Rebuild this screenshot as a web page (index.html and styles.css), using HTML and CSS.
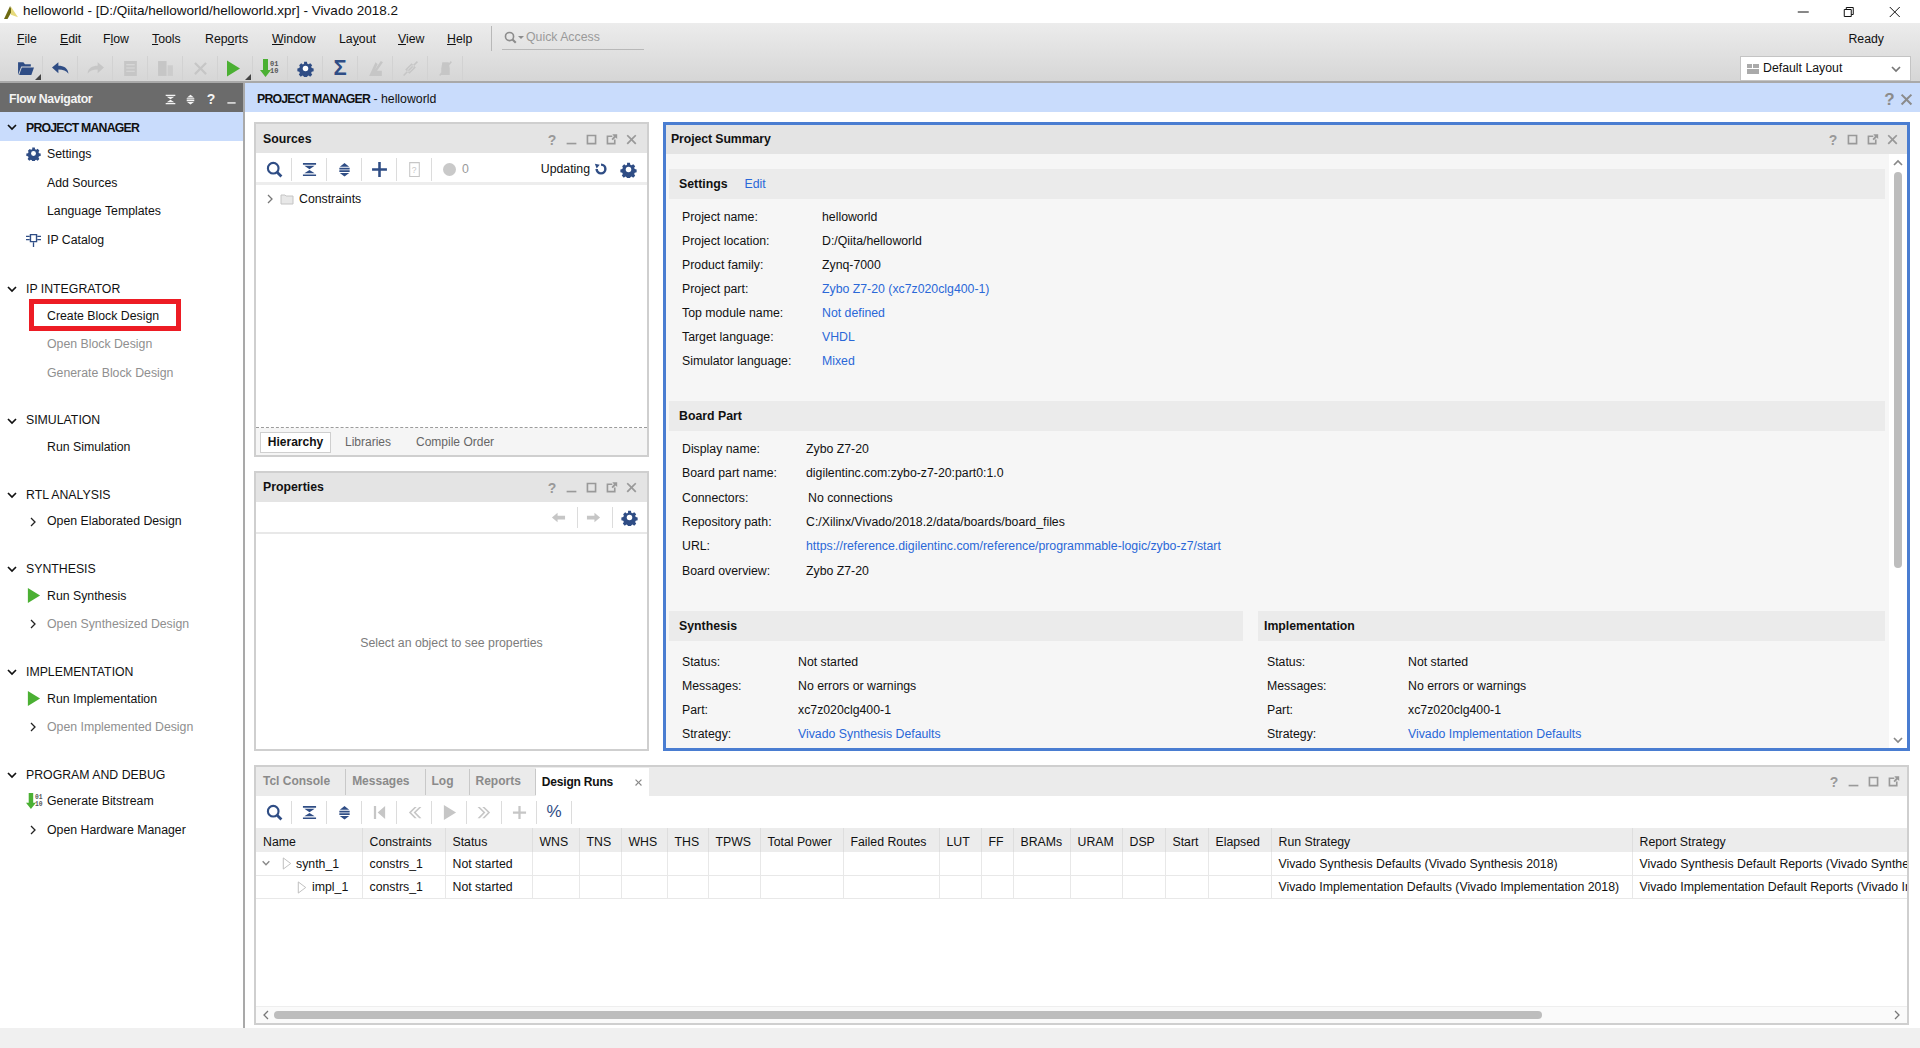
FILE: index.html
```html
<!DOCTYPE html>
<html lang="en">
<head>
<meta charset="utf-8">
<title>helloworld - Vivado 2018.2</title>
<link rel="stylesheet" href="styles.css">
</head>
<body>
<svg class="defs" aria-hidden="true">
  <symbol id="gear" viewBox="0 0 16 16"><path d="M6.500 1h3l.4 2 1.300.6 1.800-1.100 2 2.100-1.100 1.700.6 1.300 2 .4v3l-2 .4-.6 1.300 1.100 1.800-2.100 2-1.700-1.100-1.300.6-.4 2h-3l-.4-2-1.300-.6-1.800 1.100-2-2.100 1.100-1.700-.6-1.300-2-.4v-3l2-.4.6-1.300L1.400 4.600l2.100-2 1.700 1.100 1.300-.6z" transform="translate(.8 .8) scale(.9)"/><circle cx="8" cy="8" r="2.600" fill="#fff"/></symbol>
  <symbol id="search" viewBox="0 0 16 16"><circle cx="6.800" cy="6.800" r="5" fill="none" stroke="currentColor" stroke-width="2"/><path d="M10.500 10.500l4 4" stroke="currentColor" stroke-width="2.600"/></symbol>
  <symbol id="collapse" viewBox="0 0 16 16"><path d="M1 1h14v1.800H1zM1 13.200h14V15H1zM2.500 4h11L8 7.600zM8 8.400L13.500 12h-11z"/></symbol>
  <symbol id="expand" viewBox="0 0 16 16"><path d="M8 1l5 4H3zM2.500 6.200h11V8h-11zM2.500 8.800h11v1.800h-11zM3 11.600h10L8 15.400z"/></symbol>
  <symbol id="plus" viewBox="0 0 16 16"><path d="M6.800 1h2.400v5.800H15v2.400H9.200V15H6.800V9.200H1V6.800h5.800z"/></symbol>
  <symbol id="play" viewBox="0 0 16 16"><path d="M2 0l13 8-13 8z"/></symbol>
  <symbol id="first" viewBox="0 0 16 16"><path d="M2 1h2.400v14H2zM14 1v14L6 8z"/></symbol>
  <symbol id="prev" viewBox="0 0 16 16"><path d="M8 2L2 8l6 6h2.400l-6-6 6-6zM13 2L7 8l6 6h2.400l-6-6 6-6z"/></symbol>
  <symbol id="next" viewBox="0 0 16 16"><path d="M8 2l6 6-6 6H5.600l6-6-6-6zM3 2l6 6-6 6H.6l6-6-6-6z"/></symbol>
  <symbol id="cross" viewBox="0 0 16 16"><path d="M2 3.500L3.500 2 8 6.500 12.500 2 14 3.500 9.500 8l4.500 4.500-1.500 1.500L8 9.500 3.500 14 2 12.500 6.500 8z"/></symbol>
  <symbol id="min" viewBox="0 0 16 16"><path d="M2 12h12v2H2z"/></symbol>
  <symbol id="max" viewBox="0 0 16 16"><path d="M2 2h12v12H2zM4 4v8h8V4z" fill-rule="evenodd"/></symbol>
  <symbol id="pop" viewBox="0 0 16 16"><path d="M2 3h7v2H4v7h7V8h2v6H2zM9 1.500h6v6l-2-2-3.500 3.500-1.500-1.500L11 4z" fill-rule="evenodd"/></symbol>
  <symbol id="chev-d" viewBox="0 0 12 12"><path d="M2 4l4 4 4-4" fill="none" stroke="currentColor" stroke-width="1.700"/></symbol>
  <symbol id="chev-r" viewBox="0 0 12 12"><path d="M4 2l4 4-4 4" fill="none" stroke="currentColor" stroke-width="1.300"/></symbol>
  <symbol id="bits" viewBox="0 0 20 20"><path d="M3 1h5v11h3l-5.500 7L0 12h3z" fill="#4bb033"/><text x="10" y="8" font-size="7" font-family="Liberation Mono" font-weight="700" fill="#555">01</text><text x="10" y="15" font-size="7" font-family="Liberation Mono" font-weight="700" fill="#555">10</text></symbol>
  <symbol id="ipcat" viewBox="0 0 16 16"><path d="M4 2h8v9H4zM5.500 3.500v6h5v-6z" fill-rule="evenodd"/><path d="M0 4h4v1.400H0zM0 7.500h4v1.400H0zM12 4h4v1.400h-4zM12 7.500h4v1.400h-4zM7.300 11h1.400v5H7.300z"/></symbol>
  <symbol id="arrow-l" viewBox="0 0 16 16"><path d="M1 8l6-5v3h8v4H7v3z"/></symbol>
  <symbol id="arrow-r" viewBox="0 0 16 16"><path d="M15 8L9 3v3H1v4h8v3z"/></symbol>
</svg>

<header class="titlebar">
  <svg class="logo" viewBox="0 0 16 16"><path d="M0 16L7 1l2 6-5 9z" fill="#6d6a12"/><path d="M8 2l8 12-8-3z" fill="#e6da7c"/></svg>
  <span class="title">helloworld - [D:/Qiita/helloworld/helloworld.xpr] - Vivado 2018.2</span>
  <div class="winbtns">
    <svg class="winbtn" viewBox="0 0 12 12"><path d="M0 6h11" stroke="#111" fill="none"/></svg>
    <svg class="winbtn" viewBox="0 0 12 12"><path d="M1.500 3.500h7v7h-7zM3.500 3.500v-2h7v7h-2" stroke="#111" fill="none"/></svg>
    <svg class="winbtn" viewBox="0 0 12 12"><path d="M1 1l10 10M11 1L1 11" stroke="#111" fill="none"/></svg>
  </div>
</header>

<div class="chrome">
  <div class="menubar">
    <nav class="menus">
      <span class="menu m-file"><u>F</u>ile</span>
      <span class="menu m-edit"><u>E</u>dit</span>
      <span class="menu m-flow">F<u>l</u>ow</span>
      <span class="menu m-tools"><u>T</u>ools</span>
      <span class="menu m-reports">Rep<u>o</u>rts</span>
      <span class="menu m-window"><u>W</u>indow</span>
      <span class="menu m-layout">La<u>y</u>out</span>
      <span class="menu m-view"><u>V</u>iew</span>
      <span class="menu m-help"><u>H</u>elp</span>
    </nav>
    <div class="quick">
      <svg class="qicon"><use href="#search"/></svg><span class="caret"></span>
      <span>Quick Access</span>
    </div>
    <span class="ready">Ready</span>
  </div>
  <div class="toolbar">
    <div class="tools">
      <span class="tb tb-more"><svg class="ic16 navy" viewBox="0 0 16 16"><path d="M1 2h5l1.500 2H13v2H4L1 14z"/><path d="M4.500 7H16l-2.500 7H2z"/></svg></span>
      <span class="tb"><svg class="ic16 navy" viewBox="0 0 16 16"><path d="M6 2v3.500c5 0 9 2 9.500 7.500-2-3-5-4-9.500-4v3.500L0 7z"/></svg></span>
      <span class="tb"><svg class="ic16 dis" viewBox="0 0 16 16"><path d="M10 2v3.500C5 5.500 1 7.500.5 13c2-3 5-4 9.500-4v3.500L16 7z"/></svg></span>
      <span class="tb"><svg class="ic16 dis" viewBox="0 0 16 16"><path d="M2 1h12v14H2zM4 4v1h8V4zm0 3v1h8V7zm0 3v1h8v-1z" fill-rule="evenodd"/></svg></span>
      <span class="tb"><svg class="ic16 dis" viewBox="0 0 16 16"><path d="M1 1h8v14H1z"/><path d="M10 5h5v10h-5z" opacity=".7"/></svg></span>
      <span class="tb"><svg class="ic16 dis"><use href="#cross"/></svg></span>
      <span class="tb tb-more"><svg class="ic-run green"><use href="#play"/></svg></span>
      <span class="tb"><svg class="ic18"><use href="#bits"/></svg></span>
      <span class="tb"><svg class="ic16 navy"><use href="#gear"/></svg></span>
      <span class="tb sigma">Σ</span>
      <span class="tb"><svg class="ic16 dis" viewBox="0 0 16 16"><path d="M2 15L8 2l2 2-3 6h7v5zM13 1l2 1-9 13-2-1z"/></svg></span>
      <span class="tb"><svg class="ic16 dis" viewBox="0 0 16 16"><path d="M3 9l6-6 4 4-6 6zM5 9l2 2 4-4-2-2zM14 1l1 1L2 15l-1-1z" fill-rule="evenodd"/></svg></span>
      <span class="tb"><svg class="ic16 dis" viewBox="0 0 16 16"><path d="M5 2h6l1 6v6H4V8zM13 1l1 1L3 15l-1-1z"/></svg></span>
    </div>
    <div class="layout-select">
      <svg class="layout-ic" viewBox="0 0 12 10"><path d="M0 0h5v4H0zM6 0h6v4H6zM0 5h12v5H0z"/></svg>
      <span class="layout-name">Default Layout</span>
      <svg class="layout-chev"><use href="#chev-d"/></svg>
    </div>
  </div>
</div>

<main class="main">
  <aside class="nav">
    <div class="nav-head">
      <span class="nav-title">Flow Navigator</span>
      <span class="nav-head-ic">
        <svg class="ic10"><use href="#collapse"/></svg>
        <svg class="ic10"><use href="#expand"/></svg>
        <b class="q">?</b>
        <svg class="ic10"><use href="#min"/></svg>
      </span>
    </div>
    <section class="sec sec-first">
      <div class="sec-head sel"><svg class="chev"><use href="#chev-d"/></svg><b>PROJECT MANAGER</b></div>
      <div class="item"><svg class="item-ic navy"><use href="#gear"/></svg>Settings</div>
      <div class="item">Add Sources</div>
      <div class="item">Language Templates</div>
      <div class="item"><svg class="item-ic navy"><use href="#ipcat"/></svg>IP Catalog</div>
    </section>
    <section class="sec">
      <div class="sec-head"><svg class="chev"><use href="#chev-d"/></svg>IP INTEGRATOR</div>
      <div class="item hl">Create Block Design</div>
      <div class="item off">Open Block Design</div>
      <div class="item off">Generate Block Design</div>
    </section>
    <section class="sec">
      <div class="sec-head"><svg class="chev"><use href="#chev-d"/></svg>SIMULATION</div>
      <div class="item">Run Simulation</div>
    </section>
    <section class="sec">
      <div class="sec-head"><svg class="chev"><use href="#chev-d"/></svg>RTL ANALYSIS</div>
      <div class="item"><svg class="item-chev"><use href="#chev-r"/></svg>Open Elaborated Design</div>
    </section>
    <section class="sec">
      <div class="sec-head"><svg class="chev"><use href="#chev-d"/></svg>SYNTHESIS</div>
      <div class="item"><svg class="item-ic green"><use href="#play"/></svg>Run Synthesis</div>
      <div class="item off"><svg class="item-chev"><use href="#chev-r"/></svg>Open Synthesized Design</div>
    </section>
    <section class="sec">
      <div class="sec-head"><svg class="chev"><use href="#chev-d"/></svg>IMPLEMENTATION</div>
      <div class="item"><svg class="item-ic green"><use href="#play"/></svg>Run Implementation</div>
      <div class="item off"><svg class="item-chev"><use href="#chev-r"/></svg>Open Implemented Design</div>
    </section>
    <section class="sec">
      <div class="sec-head"><svg class="chev"><use href="#chev-d"/></svg>PROGRAM AND DEBUG</div>
      <div class="item"><svg class="item-ic item-bits"><use href="#bits"/></svg>Generate Bitstream</div>
      <div class="item"><svg class="item-chev"><use href="#chev-r"/></svg>Open Hardware Manager</div>
    </section>
  </aside>

  <div class="work">
    <div class="work-head">
      <span><b>PROJECT MANAGER</b> - helloworld</span>
      <span class="work-head-ic"><b class="q q-big">?</b><svg class="ic14"><use href="#cross"/></svg></span>
    </div>
    <div class="panes">
      <section class="panel p-sources">
        <div class="p-head"><b>Sources</b>
          <span class="p-ic"><b class="q">?</b><svg class="ic12"><use href="#min"/></svg><svg class="ic12"><use href="#max"/></svg><svg class="ic12"><use href="#pop"/></svg><svg class="ic12"><use href="#cross"/></svg></span>
        </div>
        <div class="p-tools">
          <span class="ti sep"><svg class="ic16 navy"><use href="#search"/></svg></span>
          <span class="ti sep"><svg class="ic14 navy"><use href="#collapse"/></svg></span>
          <span class="ti sep"><svg class="ic14 navy"><use href="#expand"/></svg></span>
          <span class="ti sep"><svg class="ic16 navy"><use href="#plus"/></svg></span>
          <span class="ti sep"><svg class="ic16 dis" viewBox="0 0 16 16"><path d="M3 1h10v14H3zM4 2v12h8V2z" fill-rule="evenodd"/><text x="5.500" y="11" font-size="8" font-family="Liberation Sans">?</text></svg></span>
          <span class="dot"></span><span class="count">0</span>
          <span class="updating">Updating</span>
          <svg class="spin" viewBox="0 0 16 16"><path d="M8 3a5 5 0 1 1-5 5" fill="none" stroke="currentColor" stroke-width="2.800"/><path d="M1 2l5.500 1-3.500 4.500z"/></svg>
          <svg class="ic16 navy gear-end"><use href="#gear"/></svg>
        </div>
        <div class="tree">
          <div class="tree-row"><svg class="tree-chev"><use href="#chev-r"/></svg><svg class="folder" viewBox="0 0 14 12"><path d="M1 2h4l1 1h7v8H1z" fill="#e8e8e8" stroke="#c4c4c4"/></svg>Constraints</div>
        </div>
        <div class="subtabs">
          <span class="subtab active">Hierarchy</span><span class="subtab">Libraries</span><span class="subtab">Compile Order</span>
        </div>
      </section>

      <section class="panel p-summary">
        <div class="p-head"><b>Project Summary</b>
          <span class="p-ic"><b class="q">?</b><svg class="ic12"><use href="#max"/></svg><svg class="ic12"><use href="#pop"/></svg><svg class="ic12"><use href="#cross"/></svg></span>
        </div>
        <div class="sum-body">
          <div class="sum-content">
            <div class="band band-first"><b>Settings</b><a class="link edit">Edit</a></div>
            <dl class="kv kv-a">
              <dt>Project name:</dt><dd>helloworld</dd>
              <dt>Project location:</dt><dd>D:/Qiita/helloworld</dd>
              <dt>Product family:</dt><dd>Zynq-7000</dd>
              <dt>Project part:</dt><dd><a class="link">Zybo Z7-20 (xc7z020clg400-1)</a></dd>
              <dt>Top module name:</dt><dd><a class="link">Not defined</a></dd>
              <dt>Target language:</dt><dd><a class="link">VHDL</a></dd>
              <dt>Simulator language:</dt><dd><a class="link">Mixed</a></dd>
            </dl>
            <div class="band"><b>Board Part</b></div>
            <dl class="kv kv-b">
              <dt>Display name:</dt><dd>Zybo Z7-20</dd>
              <dt>Board part name:</dt><dd>digilentinc.com:zybo-z7-20:part0:1.0</dd>
              <dt>Connectors:</dt><dd class="nudge">No connections</dd>
              <dt>Repository path:</dt><dd>C:/Xilinx/Vivado/2018.2/data/boards/board_files</dd>
              <dt>URL:</dt><dd><a class="link">https://reference.digilentinc.com/reference/programmable-logic/zybo-z7/start</a></dd>
              <dt>Board overview:</dt><dd>Zybo Z7-20</dd>
            </dl>
            <div class="two">
              <div>
                <div class="band"><b>Synthesis</b></div>
                <dl class="kv kv-c">
                  <dt>Status:</dt><dd>Not started</dd>
                  <dt>Messages:</dt><dd>No errors or warnings</dd>
                  <dt>Part:</dt><dd>xc7z020clg400-1</dd>
                  <dt>Strategy:</dt><dd><a class="link">Vivado Synthesis Defaults</a></dd>
                </dl>
              </div>
              <div>
                <div class="band band-impl"><b>Implementation</b></div>
                <dl class="kv kv-d">
                  <dt>Status:</dt><dd>Not started</dd>
                  <dt>Messages:</dt><dd>No errors or warnings</dd>
                  <dt>Part:</dt><dd>xc7z020clg400-1</dd>
                  <dt>Strategy:</dt><dd><a class="link">Vivado Implementation Defaults</a></dd>
                </dl>
              </div>
            </div>
          </div>
          <div class="vscroll">
            <svg class="sb-arrow"><use href="#chev-d" class="flip"/></svg>
            <div class="vthumb"></div>
            <svg class="sb-arrow"><use href="#chev-d"/></svg>
          </div>
        </div>
      </section>

      <section class="panel p-props">
        <div class="p-head"><b>Properties</b>
          <span class="p-ic"><b class="q">?</b><svg class="ic12"><use href="#min"/></svg><svg class="ic12"><use href="#max"/></svg><svg class="ic12"><use href="#pop"/></svg><svg class="ic12"><use href="#cross"/></svg></span>
        </div>
        <div class="props-tools">
          <svg class="ic14 dis"><use href="#arrow-l"/></svg><span class="vsep"></span>
          <svg class="ic14 dis"><use href="#arrow-r"/></svg><span class="vsep"></span>
          <svg class="ic16 navy"><use href="#gear"/></svg>
        </div>
        <div class="props-empty">Select an object to see properties</div>
      </section>

      <section class="panel p-runs">
        <div class="tabs">
          <span class="tab">Tcl Console</span><span class="tab">Messages</span><span class="tab">Log</span><span class="tab tab-last">Reports</span>
          <span class="tab-active"><b>Design Runs</b><svg class="ic8"><use href="#cross"/></svg></span>
          <span class="p-ic tabs-ic"><b class="q">?</b><svg class="ic12"><use href="#min"/></svg><svg class="ic12"><use href="#max"/></svg><svg class="ic12"><use href="#pop"/></svg></span>
        </div>
        <div class="p-tools runs-tools">
          <span class="ti sep"><svg class="ic16 navy"><use href="#search"/></svg></span>
          <span class="ti sep"><svg class="ic14 navy"><use href="#collapse"/></svg></span>
          <span class="ti sep"><svg class="ic14 navy"><use href="#expand"/></svg></span>
          <span class="ti sep"><svg class="ic14 dis"><use href="#first"/></svg></span>
          <span class="ti sep"><svg class="ic14 dis"><use href="#prev"/></svg></span>
          <span class="ti sep"><svg class="ic14 dis"><use href="#play"/></svg></span>
          <span class="ti sep"><svg class="ic14 dis"><use href="#next"/></svg></span>
          <span class="ti sep"><svg class="ic14 dis"><use href="#plus"/></svg></span>
          <span class="ti sep percent">%</span>
        </div>
        <div class="table-wrap">
          <table class="runs">
            <colgroup>
              <col class="c106"><col class="c83"><col class="c87"><col class="c47"><col class="c42"><col class="c46"><col class="c41"><col class="c52"><col class="c83"><col class="c96"><col class="c42"><col class="c32"><col class="c57"><col class="c52"><col class="c43"><col class="c43"><col class="c63"><col class="c361"><col class="c400">
            </colgroup>
            <thead>
              <tr><th>Name</th><th>Constraints</th><th>Status</th><th>WNS</th><th>TNS</th><th>WHS</th><th>THS</th><th>TPWS</th><th>Total Power</th><th>Failed Routes</th><th>LUT</th><th>FF</th><th>BRAMs</th><th>URAM</th><th>DSP</th><th>Start</th><th>Elapsed</th><th>Run Strategy</th><th>Report Strategy</th></tr>
            </thead>
            <tbody>
              <tr><td class="name"><svg class="row-chev"><use href="#chev-d"/></svg><svg class="tri" viewBox="0 0 10 14"><path d="M1 1l8 6-8 6z" fill="#fff" stroke="#bbb"/></svg>synth_1</td><td>constrs_1</td><td>Not started</td><td></td><td></td><td></td><td></td><td></td><td></td><td></td><td></td><td></td><td></td><td></td><td></td><td></td><td></td><td>Vivado Synthesis Defaults (Vivado Synthesis 2018)</td><td>Vivado Synthesis Default Reports (Vivado Synthesis 2018)</td></tr>
              <tr><td class="name indent"><svg class="tri" viewBox="0 0 10 14"><path d="M1 1l8 6-8 6z" fill="#fff" stroke="#bbb"/></svg>impl_1</td><td>constrs_1</td><td>Not started</td><td></td><td></td><td></td><td></td><td></td><td></td><td></td><td></td><td></td><td></td><td></td><td></td><td></td><td></td><td>Vivado Implementation Defaults (Vivado Implementation 2018)</td><td>Vivado Implementation Default Reports (Vivado Implementation 2018)</td></tr>
            </tbody>
          </table>
        </div>
        <div class="hscroll">
          <svg class="hs-arrow"><use href="#chev-r"/></svg>
          <div class="hthumb"></div>
          <svg class="hs-arrow"><use href="#chev-r"/></svg>
        </div>
      </section>
    </div>
  </div>
</main>
<footer class="status"></footer>
</body>
</html>
```
FILE: styles.css
```css
*, *::before, *::after { box-sizing: border-box; }
html, body { margin: 0; height: 100%; }
body {
  width: 1920px; height: 1048px; overflow: hidden;
  display: flex; flex-direction: column;
  font: 12.3px/1.2 "Liberation Sans", Arial, sans-serif;
  color: #111; background: #fff;
}
b { font-weight: 700; }
.defs { display: none; }
svg { display: block; flex: none; fill: currentColor; }
.navy { color: #2f4d85; }
.dis { color: #c6c6c6; }
.green { color: #4bb033; }
.ic8 { width: 9px; height: 9px; }
.ic10 { width: 11px; height: 11px; }
.ic12 { width: 13px; height: 13px; }
.ic14 { width: 15px; height: 15px; }
.ic16 { width: 17px; height: 17px; }
.ic18 { width: 20px; height: 20px; }
.ic-run { width: 16px; height: 17px; margin-right: 4px; }

/* title */
.titlebar { height: 23px; display: flex; align-items: center; padding-left: 4px; flex: none; }
.logo { width: 14px; height: 14px; margin-right: 5px; }
.title { font-size: 13.500px; }
.winbtns { margin-left: auto; display: flex; padding-right: 3px; }
.winbtn { width: 45.500px; height: 12px; padding: 0 16px; }

/* chrome */
.chrome { height: 60px; flex: none; background: linear-gradient(#ececec, #d6d6d6); border-bottom: 2px solid #a9a9a9; }
.menubar { height: 31px; display: flex; align-items: center; padding-left: 17px; }
.menus { display: flex; height: 100%; align-items: center; padding-top: 1px; }
.menu { flex: none; }
.m-file { width: 43px; } .m-edit { width: 43px; } .m-flow { width: 49px; } .m-tools { width: 53px; }
.m-reports { width: 67px; } .m-window { width: 67px; } .m-layout { width: 59px; } .m-view { width: 49px; } .m-help { width: 43px; }
.quick {
  display: flex; align-items: center; gap: 4px; width: 153px; height: 25px; margin: 0 0 0 1px;
  position: relative; color: #9a9a9a; padding: 0 0 3px 12px; border-left: 1px solid #b8b8b8;
}
.quick::after { content: ""; position: absolute; left: 10px; right: 0; bottom: 1px; border-bottom: 1px solid #b8b8b8; }
.qicon { width: 13px; height: 13px; color: #8c8c8c; }
.caret { width: 0; height: 0; border: 3px solid transparent; border-top-color: #8c8c8c; margin: 3px -2px 0 -3px; }
.ready { margin-left: auto; margin-right: 36px; padding-top: 1px; }
.toolbar { height: 27px; display: flex; align-items: flex-start; justify-content: space-between; padding: 2px 9px 0 8px; }
.tools { display: flex; }
.tb { width: 35px; height: 24px; display: flex; align-items: center; justify-content: center; border-right: 1px solid #d2d2d2; position: relative; }
.tb-more::after { content: ""; position: absolute; right: 1px; bottom: 0; border: 3px solid transparent; border-right-color: #444; border-bottom-color: #444; }
.sigma { font-size: 22px; font-weight: 700; color: #2f4d85; }
.layout-select { width: 171px; height: 25px; background: #fff; border: 1px solid #c4c4c4; display: flex; align-items: center; padding: 0 8px 0 6px; }
.layout-ic { width: 12px; height: 10px; color: #aaa; margin-right: 4px; }
.layout-name { flex: 1; }
.layout-chev { width: 12px; height: 12px; color: #777; }

/* main */
.main { flex: 1; display: flex; min-height: 0; }
.nav { width: 245px; flex: none; border-right: 2px solid #a9a9a9; }
.nav-head { height: 29px; background: #6b6b6b; color: #f4f4f4; display: flex; align-items: center; justify-content: space-between; padding: 3px 6px 0 9px; }
.nav-title { font-weight: 700; letter-spacing: -.35px; }
.nav-head-ic { display: flex; align-items: center; gap: 9px; }
.q { font-size: 14px; line-height: 1; width: 12px; text-align: center; }
.q-big { font-size: 17px; }
.sec { margin-bottom: 20.500px; }
.sec-first { margin-bottom: 22px; }
.sec-head { height: 25px; display: flex; align-items: center; padding-left: 26px; position: relative; }
.sec-head.sel { height: 29px; background: #c9dcfc; margin-bottom: -1px; padding-top: 3px; }
.sel b { letter-spacing: -.8px; }
.chev { position: absolute; left: 6px; top: 50%; margin-top: -6px; width: 12px; height: 12px; }
.item { height: 28.700px; display: flex; align-items: center; padding-left: 47px; position: relative; }
.item.off { color: #8f8f8f; }
.item-ic { position: absolute; left: 26px; top: 6px; width: 15px; height: 15px; }
.item-bits { width: 18px; height: 18px; top: 5px; }
.item-chev { position: absolute; left: 27px; top: 8px; width: 12px; height: 12px; color: #222; }
.hl::after { content: ""; position: absolute; left: 29px; width: 152px; top: -2.500px; height: 32px; border: 5px solid #ed1c24; }

/* work */
.work { flex: 1; min-width: 0; display: flex; flex-direction: column; }
.work-head { height: 29px; flex: none; background: #c9dcfc; display: flex; align-items: center; justify-content: space-between; padding: 3px 6px 0 12px; }
.work-head b { letter-spacing: -.8px; }
.work-head-ic { display: flex; align-items: center; gap: 4px; color: #8b8b8b; }
.panes {
  flex: 1; display: grid; min-height: 0;
  grid-template-columns: 395px 1247px;
  grid-template-rows: 335px 280px 260px;
  column-gap: 14px; row-gap: 14px; padding: 10px 10px 3px 9px;
}
.panel { border: 2px solid #cfcfcf; display: flex; flex-direction: column; min-height: 0; min-width: 0; overflow: hidden; background: #fff; }
.p-head { height: 29px; flex: none; background: #e4e4e4; display: flex; align-items: center; justify-content: space-between; padding: 0 9px 0 7px; }
.p-ic { display: flex; align-items: center; gap: 7px; color: #999; }
.p-sources { grid-column: 1; grid-row: 1; background: #fff; }
.p-sources .p-head { padding-top: 2px; }
.p-props { grid-column: 1; grid-row: 2; }
.p-summary { grid-column: 2; grid-row: 1 / 3; border: 3px solid #4a7dd1; }
.p-summary .p-head { padding: 0 8px 0 5px; letter-spacing: -.1px; }
.p-runs { grid-column: 1 / 3; grid-row: 3; width: 1655px; }

.p-tools { height: 32px; flex: none; display: flex; align-items: center; border-bottom: 3px solid #ededed; padding: 0 0 0 1px; }
.p-sources .p-tools { padding-top: 3px; }
.ti { width: 35px; height: 23px; display: flex; align-items: center; justify-content: center; }
.sep { border-right: 1px solid #dcdcdc; }
.dot { width: 13px; height: 13px; border-radius: 50%; background: #c9c9c9; margin-left: 11px; }
.count { color: #9a9a9a; margin-left: 6px; }
.updating { margin-left: auto; margin-right: 4px; }
.spin { width: 14px; height: 14px; color: #2f4d85; margin-right: 12px; }
.gear-end { margin-right: 10px; }
.tree { flex: 1; padding-top: 3px; border-bottom: 1px dashed #9c9c9c; }
.tree-row { height: 22px; display: flex; align-items: center; padding-left: 8px; }
.tree-chev { width: 12px; height: 12px; color: #777; }
.folder { width: 14px; height: 12px; margin: 0 5px 0 4px; }
.subtabs { height: 27px; flex: none; background: #f5f5f5; display: flex; align-items: center; padding: 1px 0 0 4px; color: #666; font-size: 12px; }
.subtab { height: 21px; padding: 0 11.500px; display: flex; align-items: center; border: 1px solid transparent; }
.subtab.active { width: 71px; padding: 0; justify-content: center; background: #fff; border-color: #cfcfcf; font-weight: 700; color: #111; margin-right: 1.500px; }

.props-tools { height: 32px; flex: none; display: flex; align-items: center; justify-content: flex-end; border-bottom: 2px solid #e8e8e8; padding-right: 9px; gap: 8px; }
.vsep { width: 1px; height: 21px; background: #dcdcdc; margin-left: 3px; }
.props-empty { flex: 1; display: flex; align-items: center; justify-content: center; color: #7c7c7c; padding-top: 4px; }

/* summary */
.sum-body { flex: 1; min-height: 0; display: flex; background: #f6f6f6; overflow: hidden; }
.sum-content { flex: 1; min-width: 0; padding: 15px 4px 0 3px; }
.band { height: 30px; background: #ebebeb; display: flex; align-items: center; padding-left: 10px; margin-top: 28px; }
.band-first { margin-top: 0; }
.band-impl { padding-left: 6px; }
.link { color: #2a68d8; }
.edit { margin-left: 17px; }
.kv { margin: 6px 0 0; display: grid; grid-auto-rows: 24px; align-items: center; padding-left: 13px; }
.kv dt, .kv dd { margin: 0; }
.kv-a { grid-template-columns: 140px 1fr; }
.kv-b { grid-template-columns: 124px 1fr; grid-auto-rows: 24.400px; margin-top: 6px; }
.kv-c { grid-template-columns: 116px 1fr; margin-top: 9px; }
.kv-d { grid-template-columns: 141px 1fr; margin-top: 9px; padding-left: 9px; }
.nudge { padding-left: 2px; }
.two { display: grid; grid-template-columns: 574px 627px; column-gap: 15px; }
.vscroll { width: 18px; flex: none; background: #fff; display: flex; flex-direction: column; align-items: center; padding: 3px 0 2px; }
.sb-arrow { width: 12px; height: 12px; color: #888; }
.flip { transform: rotate(180deg); transform-origin: 6px 6px; }
.vthumb { width: 8px; height: 396px; background: #bdbdbd; border-radius: 4px; margin: 3px 0 auto; }

/* runs */
.tabs { height: 29px; flex: none; background: #ebebeb; display: flex; align-items: center; color: #8a8a8a; font-weight: 700; font-size: 12px; padding-left: 7px; }
.tab { height: 26px; display: flex; align-items: center; padding-right: 15px; margin-right: 6px; border-right: 1px solid #c8c8c8; }
.tab-last { margin-right: 0; padding-right: 14px; }
.tab-active { height: 28px; width: 113px; margin-top: 1px; background: #fff; color: #111; display: flex; align-items: center; justify-content: space-between; padding: 0 6px; }
.tab-active b { letter-spacing: -.2px; }
.tab-active svg { color: #888; }
.tabs-ic { margin-left: auto; padding-right: 7px; }
.runs-tools { border-bottom: 0; height: 32px; }
.percent { font-size: 17px; color: #2f4d85; font-weight: 400; }
.table-wrap { flex: 1; min-height: 0; overflow: hidden; }
.runs { border-collapse: collapse; table-layout: fixed; width: 1748px; }
.runs th { height: 24px; background: #ececec; font-weight: 400; text-align: left; padding: 4px 0 0 7px; border-right: 1px solid #dedede; white-space: nowrap; overflow: hidden; }
.runs td { height: 23px; padding: 2px 0 0 7px; border-right: 1px solid #e8e8e8; border-bottom: 1px solid #e8e8e8; white-space: nowrap; overflow: hidden; }
.c106 { width: 106px; } .c83 { width: 83px; } .c87 { width: 87px; } .c47 { width: 47px; } .c42 { width: 42px; } .c46 { width: 46px; }
.c41 { width: 41px; } .c52 { width: 52px; } .c96 { width: 96px; } .c32 { width: 32px; } .c57 { width: 57px; } .c43 { width: 43px; }
.c63 { width: 63px; } .c361 { width: 361px; } .c400 { width: 400px; }
.name { position: relative; }
.runs td.name { padding-left: 40px; }
.runs td.indent { padding-left: 56px; }
.row-chev { position: absolute; left: 5px; top: 6px; width: 10px; height: 10px; color: #888; }
.tri { position: absolute; left: 26px; top: 5px; width: 10px; height: 13px; }
.indent .tri { left: 41px; }
.hscroll { height: 17px; flex: none; background: #fafafa; border-top: 1px solid #eee; display: flex; align-items: center; padding: 0 4px; }
.hs-arrow { width: 12px; height: 12px; color: #777; }
.hs-arrow:first-child { transform: rotate(180deg); }
.hthumb { width: 1268px; height: 8px; background: #bdbdbd; border-radius: 4px; margin: 0 auto 0 2px; }
.status { height: 20px; flex: none; background: #f0f0f0; }
```
